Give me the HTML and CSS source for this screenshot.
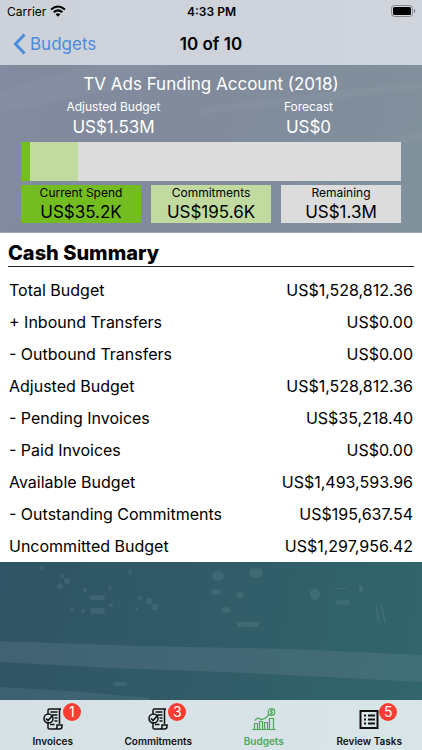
FILE: index.html
```html
<!DOCTYPE html>
<html lang="en">
<head>
<meta charset="utf-8">
<meta name="viewport" content="width=device-width, initial-scale=1">
<title>Budgets</title>
<link rel="stylesheet" href="styles.css">
</head>
<body>
<header class="top">
  <div class="status">
    <span class="carrier">Carrier
      <svg class="wifi" viewBox="0 0 16 12" aria-hidden="true"><path d="M1 4.6Q8-1.6 15 4.6M3.6 7.3Q8 3.5 12.4 7.3" fill="none" stroke="#000" stroke-width="2"/><path d="M5.6 9.3Q8 7.2 10.4 9.3L8 11.8Z"/></svg>
    </span>
    <span class="clock">4:33 PM</span>
    <svg class="battery" viewBox="0 0 25 12" aria-hidden="true"><rect x=".5" y=".5" width="21" height="11" rx="3" fill="none" stroke="#85888e"/><rect x="2" y="2" width="18" height="8" rx="1.5"/><path d="M23 4Q24.4 4.6 24.4 6T23 8Z" fill="#85888e"/></svg>
  </div>
  <nav class="nav">
    <a class="back" href="#budgets"><svg viewBox="0 0 12 22" aria-hidden="true"><path d="M11 1.5 2 11l9 9.500" fill="none" stroke="#4a8bdc" stroke-width="3"/></svg>Budgets</a>
    <h1 class="page-title">10 of 10</h1>
  </nav>
</header>
<main class="content">
  <svg class="backdrop" viewBox="0 0 422 139" preserveAspectRatio="none" aria-hidden="true">
    <path d="M0 80 140 85 290 88 422 94V121L250 112 110 107 0 101Z" fill="#7890a0" opacity=".24"/>
    <path d="M0 126 70 130 150 137V139H0Z" fill="#7890a0" opacity=".2"/>
    <g fill="#8ba5b0" opacity=".16">
      <rect x="90" y="34" width="15" height="5" rx="2"/><rect x="90" y="47" width="15" height="6" rx="3"/><rect x="336" y="39" width="14" height="5" rx="2"/><rect x="335" y="27" width="12" height="1"/><rect x="237" y="61" width="22" height="5"/>
      <ellipse cx="315" cy="33" rx="5" ry="6"/><ellipse cx="256" cy="12" rx="7" ry="5"/><ellipse cx="218" cy="15" rx="6" ry="5"/><ellipse cx="216" cy="31" rx="5" ry="3"/><ellipse cx="240" cy="34" rx="4" ry="3"/><ellipse cx="226" cy="49" rx="5" ry="3"/><ellipse cx="120" cy="123" rx="7" ry="2"/><ellipse cx="361" cy="28" rx="2" ry="4"/><path d="M376 46 379 61M381 44l4 17" stroke="#8ba5b0" stroke-width="2"/>
      <circle cx="42" cy="7" r="2"/><circle cx="62" cy="15" r="2"/><circle cx="67" cy="20" r="3"/><circle cx="60" cy="25" r="3"/><circle cx="85" cy="29" r="2"/><circle cx="110" cy="27" r="2"/><circle cx="130" cy="11" r="2"/><circle cx="140" cy="37" r="2"/><circle cx="149" cy="40" r="3"/><circle cx="155" cy="46" r="3"/><circle cx="137" cy="48" r="2"/><circle cx="111" cy="44" r="2"/><circle cx="72" cy="48" r="2"/><circle cx="83" cy="50" r="2"/>
    </g>
  </svg>
  <section class="summary">
    <svg class="summary-bg" viewBox="0 0 422 168" preserveAspectRatio="none" aria-hidden="true"><path d="M0 48 120 24 170 0H90L0 26ZM422 68 300 88V94L422 76ZM200 42 422 16V24L200 50Z" fill="#fff" opacity=".03"/></svg>
    <h2 class="account">TV Ads Funding Account (2018)</h2>
    <div class="totals">
      <p class="total"><span class="label">Adjusted Budget</span><span class="amount">US$1.53M</span></p>
      <p class="total"><span class="label">Forecast</span><span class="amount">US$0</span></p>
    </div>
    <div class="bar"><div class="bar-spend" style="width:2.3%"></div><div class="bar-commit" style="width:12.8%"></div></div>
    <div class="cards">
      <p class="card spend"><span class="label">Current Spend</span><span class="amount">US$35.2K</span></p>
      <p class="card commit"><span class="label">Commitments</span><span class="amount">US$195.6K</span></p>
      <p class="card remain"><span class="label">Remaining</span><span class="amount">US$1.3M</span></p>
    </div>
  </section>
  <section class="cash">
    <h2 class="cash-title" id="cash">Cash Summary</h2>
    <table class="cash-table" aria-labelledby="cash">
      <tbody>
      <tr><th scope="row">Total Budget</th><td>US$1,528,812.36</td></tr>
      <tr><th scope="row">+ Inbound Transfers</th><td>US$0.00</td></tr>
      <tr><th scope="row">- Outbound Transfers</th><td>US$0.00</td></tr>
      <tr><th scope="row">Adjusted Budget</th><td>US$1,528,812.36</td></tr>
      <tr><th scope="row">- Pending Invoices</th><td>US$35,218.40</td></tr>
      <tr><th scope="row">- Paid Invoices</th><td>US$0.00</td></tr>
      <tr><th scope="row">Available Budget</th><td>US$1,493,593.96</td></tr>
      <tr><th scope="row">- Outstanding Commitments</th><td>US$195,637.54</td></tr>
      <tr><th scope="row">Uncommitted Budget</th><td>US$1,297,956.42</td></tr>
      </tbody>
    </table>
  </section>
</main>
<nav class="tabs">
  <a class="tab" href="#invoices">
    <span class="icon"><svg viewBox="0 0 20 22" aria-hidden="true"><use href="#invoice"/></svg><span class="badge">1</span></span>Invoices</a>
  <a class="tab" href="#commitments">
    <span class="icon"><svg viewBox="0 0 20 22" aria-hidden="true"><g id="invoice" fill="none" stroke="#111" stroke-width="1.500"><path d="M5 6V2.500Q5 1 6.500 1H18Q16.500 1 16.500 3V16M5 14V20Q5 21 6.500 21H16.500Q19 21 19 18.500V17H14V19Q14 21 12 21M7.500 4H14.500M9.500 7H14.500M11.500 10H14.500M11.500 13H14.500M7 16.500H11.500"/><circle cx="5.500" cy="10.500" r="4.500"/><path d="M3 10.500 5 12.500 10 7" stroke-width="1.700"/></g></svg><span class="badge">3</span></span>Commitments</a>
  <a class="tab active" href="#budgets" aria-current="page">
    <span class="icon"><svg class="chart" viewBox="0 0 26 22" aria-hidden="true"><g fill="none" stroke="currentColor" stroke-width="1.200"><path d="M1 21.500H25M3.500 21V15.500H6.500V21M8.500 21V13.500H11.500V21M13.500 21V14.500H16.500V21M18.500 21V10.500H22.500V21"/><path d="M3.500 12.500 7 10 10.500 11.500 14 10.500 18 6.500"/><circle cx="20.500" cy="4" r="3.300"/><path d="M22 2.500H19.500V4H21.500V5.500H19M20.500 1.500V6.500" stroke-width=".8"/></g></svg></span>Budgets</a>
  <a class="tab" href="#review">
    <span class="icon"><svg viewBox="0 0 20 22" aria-hidden="true"><path d="M1.500 3H18.500V20H1.500Z" fill="none" stroke="#111" stroke-width="2"/><path d="M5 7.500H7M9 7.500H16M5 11.500H7M9 11.500H16M5 15.500H7M9 15.500H16" stroke="#111" stroke-width="2"/></svg><span class="badge">5</span></span>Review Tasks</a>
</nav>
</body>
</html>
```
FILE: styles.css
```css
* { box-sizing: border-box; }
body {
  margin: 0;
  min-height: 100vh;
  display: flex;
  flex-direction: column;
  font-family: Inter, "Liberation Sans", sans-serif;
  color: #000;
  background: #d8e3e7;
}
h1, h2, p { margin: 0; font-weight: 400; }
a { text-decoration: none; }
svg { display: block; }

.top { background: linear-gradient(90deg, #cdd1da, #d0d4dc); }
.status {
  display: grid;
  grid-template-columns: 1fr auto 1fr;
  align-items: center;
  height: 22px;
  padding: 0 6px 0 7px;
  font-size: 12px;
}
.carrier { display: flex; align-items: center; gap: 4px; }
.wifi { width: 16px; height: 12px; }
.clock { font-weight: 600; }
.battery { width: 25px; height: 12px; justify-self: end; }
.nav {
  display: grid;
  grid-template-columns: 1fr auto 1fr;
  align-items: center;
  height: 43px;
  padding: 0 13px;
}
.back { display: flex; align-items: center; gap: 4px; font-size: 17px; color: #4a8bdc; }
.back svg { width: 13px; height: 22px; }
.page-title { font-size: 17px; font-weight: 600; }

.content {
  position: relative;
  flex: 1;
  background: linear-gradient(100deg, #2e5164, #315b68 55%, #31666a);
}
.backdrop { position: absolute; left: 0; bottom: 0; width: 100%; height: 139px; }

.summary {
  position: relative;
  padding: 8px 21px 9px;
  background: linear-gradient(105deg, #828b9f, #818b9c 50%, #80919c);
  border-bottom: 1px solid #99a5b0;
  text-align: center;
}
.summary-bg { position: absolute; left: 0; top: 0; width: 100%; height: 100%; }
.summary > :not(.summary-bg) { position: relative; }
.account { font-size: 17px; line-height: 22px; color: #fff; }
.totals {
  display: grid;
  grid-template-columns: 1fr 1fr;
  margin: 0 -5px;
  padding: 3px 0 4px;
  color: #fff;
}
.label, .amount { display: block; }
.label { font-size: 12px; line-height: 16px; }
.amount { font-size: 17px; line-height: 22px; }
.totals .label { line-height: 18px; }
.bar { display: flex; height: 39px; background: #dcdcdc; }
.bar-spend, .spend { background: #74bd20; }
.bar-commit, .commit { background: #c0daa0; }
.remain { background: #dcdcdc; }
.cards { display: grid; grid-template-columns: 1fr 1fr 1fr; gap: 10px; padding-top: 4px; }

.cash { position: relative; padding: 8px 8px 0; background: #fff; }
.cash-title {
  padding-bottom: 1px;
  border-bottom: 1px solid #222;
  font-size: 20px;
  font-weight: 800;
  line-height: 24px;
}
.cash-table { width: 100%; margin-top: 7px; border-collapse: collapse; font-size: 16px; }
.cash-table th, .cash-table td { height: 32px; padding: 0 1px; }
.cash-table th { font-weight: 400; text-align: left; }
.cash-table td { text-align: right; }

.tabs {
  display: grid;
  grid-template-columns: repeat(4, 1fr);
  height: 50px;
  background: linear-gradient(90deg, #d6e1e6, #d8e5e7);
}
.tab {
  display: flex;
  flex-direction: column;
  align-items: center;
  gap: 5px;
  padding-top: 8px;
  font-size: 10px;
  line-height: 12px;
  font-weight: 600;
  color: #111;
}
.tab.active { color: #4ba755; }
.icon { position: relative; }
.icon svg { width: 20px; height: 22px; }
.icon .chart { width: 26px; }
.badge {
  position: absolute;
  left: 20px;
  top: -5px;
  width: 18px;
  height: 18px;
  border-radius: 9px;
  background: #fb3c30;
  color: #fff;
  font-size: 14px;
  font-weight: 400;
  line-height: 18px;
  text-align: center;
}
```
